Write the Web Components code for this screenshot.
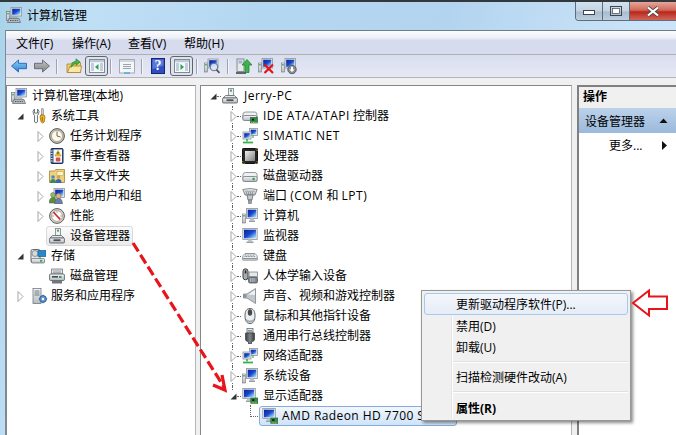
<!DOCTYPE html>
<html lang="zh">
<head>
<meta charset="utf-8">
<title>计算机管理</title>
<style>
  html,body{margin:0;padding:0;width:676px;height:435px;overflow:hidden;background:#fff}
  body{font:12px "Open Sans","Noto Sans CJK SC",sans-serif;color:#000}
  .en{letter-spacing:.5px}
  .wide{letter-spacing:.42px}
</style>
</head>
<body>
<mmc-window>
  <span slot="title">计算机管理</span>
  <mmc-menubar slot="menu"></mmc-menubar>
  <mmc-toolbar slot="tools"></mmc-toolbar>

  <mmc-pane slot="left" style="width:190px">
    <tree-row icon="app" ix="4" tx="25">计算机管理(本地)</tree-row>
    <tree-row open ax="10" icon="tools" ix="24" tx="44">系统工具</tree-row>
    <tree-row closed ax="30" icon="clock" ix="42" tx="63">任务计划程序</tree-row>
    <tree-row closed ax="30" icon="log" ix="42" tx="63">事件查看器</tree-row>
    <tree-row closed ax="30" icon="share" ix="42" tx="63">共享文件夹</tree-row>
    <tree-row closed ax="30" icon="users" ix="42" tx="63">本地用户和组</tree-row>
    <tree-row closed ax="30" icon="perf" ix="42" tx="63">性能</tree-row>
    <tree-row icon="devmgr" ix="42" tx="63" focus box-width="87">设备管理器</tree-row>
    <tree-row open ax="10" icon="storage" ix="23" tx="44">存储</tree-row>
    <tree-row icon="disk" ix="42" tx="63">磁盘管理</tree-row>
    <tree-row closed ax="10" icon="services" ix="25" tx="44">服务和应用程序</tree-row>
  </mmc-pane>

  <mmc-pane slot="center" style="width:372px">
    <tree-row open ax="9" icon="devmgr" ix="21" tx="43" dash="15"><span class="en">Jerry-PC</span></tree-row>
    <tree-row closed ax="29" icon="ide" ix="41" tx="62" guide><span class="en">IDE ATA/ATAPI</span> 控制器</tree-row>
    <tree-row closed ax="29" icon="net" ix="41" tx="62" guide><span class="en">SIMATIC NET</span></tree-row>
    <tree-row closed ax="29" icon="cpu" ix="41" tx="62" guide>处理器</tree-row>
    <tree-row closed ax="29" icon="drive" ix="41" tx="62" guide>磁盘驱动器</tree-row>
    <tree-row closed ax="29" icon="port" ix="41" tx="62" guide>端口 <span class="en">(COM</span> 和 <span class="en">LPT)</span></tree-row>
    <tree-row closed ax="29" icon="computer" ix="41" tx="62" guide>计算机</tree-row>
    <tree-row closed ax="29" icon="monitor" ix="41" tx="62" guide>监视器</tree-row>
    <tree-row closed ax="29" icon="keyboard" ix="41" tx="62" guide>键盘</tree-row>
    <tree-row closed ax="29" icon="hid" ix="41" tx="62" guide>人体学输入设备</tree-row>
    <tree-row closed ax="29" icon="sound" ix="41" tx="62" guide>声音、视频和游戏控制器</tree-row>
    <tree-row closed ax="29" icon="mouse" ix="41" tx="62" guide>鼠标和其他指针设备</tree-row>
    <tree-row closed ax="29" icon="usb" ix="41" tx="62" guide>通用串行总线控制器</tree-row>
    <tree-row closed ax="29" icon="net" ix="41" tx="62" guide>网络适配器</tree-row>
    <tree-row closed ax="29" icon="computer" ix="41" tx="62" guide>系统设备</tree-row>
    <tree-row open ax="29" icon="display" ix="41" tx="62" guide>显示适配器</tree-row>
    <tree-row icon="display" ix="61" tx="81" selected box-width="198" elbow><span class="wide">AMD Radeon HD 7700 Series</span></tree-row>
  </mmc-pane>

  <mmc-actions slot="right"></mmc-actions>
</mmc-window>

<context-menu>
  <menu-item hover>更新驱动程序软件(P)...</menu-item>
  <menu-item>禁用(D)</menu-item>
  <menu-item>卸载(U)</menu-item>
  <menu-sep style="margin-top:3.5px;margin-bottom:3.5px"></menu-sep>
  <menu-item>扫描检测硬件改动(A)</menu-item>
  <menu-sep></menu-sep>
  <menu-item bold>属性(R)</menu-item>
</context-menu>

<red-marks></red-marks>

<script>
// all icons are drawn on a 16x16 box
const DEFS = `<defs>
  <linearGradient id="scr" x1="0" y1="0" x2="1" y2="1"><stop offset="0" stop-color="#0a2398"/><stop offset=".5" stop-color="#1a48cc"/><stop offset=".72" stop-color="#5f9be8"/><stop offset="1" stop-color="#d4e8fb"/></linearGradient>
  <linearGradient id="metal" x1="0" y1="0" x2="0" y2="1"><stop offset="0" stop-color="#f4f6f7"/><stop offset="1" stop-color="#b4bbc0"/></linearGradient>
  <linearGradient id="dark" x1="0" y1="0" x2="1" y2="0"><stop offset="0" stop-color="#3a3e41"/><stop offset=".5" stop-color="#80868a"/><stop offset="1" stop-color="#34383b"/></linearGradient>
  <linearGradient id="chip" x1="0" y1="0" x2="1" y2="1"><stop offset="0" stop-color="#f0f0f0"/><stop offset="1" stop-color="#7f7f7f"/></linearGradient>
  <linearGradient id="blue" x1="0" y1="0" x2="0" y2="1"><stop offset="0" stop-color="#8fd0f8"/><stop offset="1" stop-color="#2c82d2"/></linearGradient>
  <linearGradient id="grey" x1="0" y1="0" x2="0" y2="1"><stop offset="0" stop-color="#c2c4c6"/><stop offset="1" stop-color="#7f8284"/></linearGradient>
</defs>`;
const screen = (x,y,w,h) => `<rect x="${x}" y="${y}" width="${w}" height="${h}" fill="#e4e7ea" stroke="#8d959c" stroke-width=".8"/><rect x="${x+1.2}" y="${y+1.2}" width="${w-2.4}" height="${h-2.4}" fill="url(#scr)"/>`;
const stand = (x,y,w) => `<path d="M${x+w/2-1.5} ${y}h3l1 2h-5z" fill="#bcc3c9"/><rect x="${x}" y="${y+2}" width="${w}" height="1.5" fill="#98a0a6"/>`;
const card = (x,y) => `<rect x="${x}" y="${y}" width="7" height="5.5" fill="#2f8f4a" stroke="#1d5e30" stroke-width=".6"/><path d="M${x+.8} ${y+5}h5.4" stroke="#e2c64a" stroke-dasharray="1 .6"/><rect x="${x+1.4}" y="${y+1.2}" width="2.2" height="1.8" fill="#111"/>`;
const tower = (y) => `<rect x=".5" y="${y}" width="3" height="9" fill="url(#metal)" stroke="#70777c" stroke-width=".6"/><rect x="1.2" y="${y+1}" width="1.5" height="1.6" fill="#3da24f"/>`;
const ICONS = {
  back:`<path d="M.5 8 7.500 2v3.300h8v5.400h-8V14z" fill="url(#blue)" stroke="#2d6fb4"/>`,
  fwd:`<path d="M15.500 8 8.500 2v3.300h-8v5.400h8V14z" fill="url(#grey)" stroke="#6d7072"/>`,
  upfolder:`<path d="M1 14.500V6h4l1-1.500h8.500v10z" fill="#f0cf72" stroke="#a8842c" stroke-width=".8"/><path d="M1.500 14.500 4 8h11.500l-1 6.500z" fill="#fbe6a2" stroke="#a8842c" stroke-width=".8"/><path d="M5 9.500q.5-5.500 5-6.500V.8L14 4l-4 3.400V5.200Q7 6 5 9.500z" fill="#47b548" stroke="#227a2b" stroke-width=".6"/>`,
  panelLeft:`<rect x=".5" y="1.500" width="15" height="13" fill="#f6f8fb" stroke="#7f8b97"/><rect x="1" y="2" width="14" height="2.200" fill="#bcc9d6"/><path d="M2 6h3M2 8h3M2 10h3M2 12h3M11 6h3M11 8h3M11 10h3M11 12h3" stroke="#8fa4bb"/><path d="M9.500 6v6L6 9z" fill="#2aa05a"/>`,
  panelRight:`<rect x=".5" y="1.500" width="15" height="13" fill="#f6f8fb" stroke="#7f8b97"/><rect x="1" y="2" width="14" height="2.200" fill="#bcc9d6"/><path d="M2 6h3M2 8h3M2 10h3M2 12h3M11 6h3M11 8h3M11 10h3M11 12h3" stroke="#8fa4bb"/><path d="M6.500 6v6l3.500-3z" fill="#2aa05a"/>`,
  sheet:`<rect x=".5" y="1.500" width="15" height="13.500" fill="#f4f6f8" stroke="#a3abb2"/><rect x="1" y="2" width="14" height="2" fill="#cfd6dc"/><path d="M4 6.500h8M4 8.500h8M4 10.500h8" stroke="#97a3ae"/><path d="M5 15h6" stroke="#45a7e0" stroke-width="1.400"/>`,
  help:`<rect x=".5" y=".5" width="13" height="15" fill="#2f4fc0" stroke="#17266f"/><path d="M1.500 1.500h11v6L1.500 11z" fill="#6f8ce6" opacity=".7"/>`,
  scan:`${tower(5)}${screen(4,1,10,9)}<circle cx="10" cy="9" r="3.800" fill="#dcecfa" fill-opacity=".85" stroke="#66727e"/><path d="M12.500 11.600 15.500 15" stroke="#555" stroke-width="1.800"/>`,
  update:`<rect x="1" y="1" width="7" height="12.500" fill="#e6e9ea" stroke="#6e757a" stroke-width=".8"/><rect x="2.500" y="2.500" width="4" height="3" fill="#9fb8cc"/><path d="M0 15h10" stroke="#444" stroke-width="1.600"/><path d="M11 1.500 16 7h-3v7.500H9V7H6z" fill="#39b54a" stroke="#1d7a2a" stroke-width=".7"/>`,
  remove:`${tower(5)}${screen(4,.5,10.500,9.500)}<path d="M6.500 6.500 15 15M15 6.500 6.500 15" stroke="#e2141a" stroke-width="2.200"/>`,
  disable:`${tower(5)}${screen(4,.5,10.500,9.500)}<circle cx="11" cy="11.500" r="4.200" fill="#8a9096" stroke="#555b60"/><path d="M10 8.800h2v2.600h1.600L11 14l-2.600-2.600H10z" fill="#fff"/>`,
  app:`${screen(5,.5,10.500,8.500)}<rect x="3.500" y="9.500" width="8" height="1.200" fill="#9aa1a8"/><rect x=".4" y="4.500" width="3.400" height="9" fill="url(#metal)" stroke="#6e767c" stroke-width=".7"/><rect x="1.200" y="5.800" width="1.600" height="1.600" fill="#3da24f"/><path d="M3 11.500h10l1.500 4H1.500z" fill="#b4babf" stroke="#5e666c" stroke-width=".7"/><path d="M4 13.500h8" stroke="#555" stroke-dasharray="1 .7"/>`,
  tools:`<path d="M3.500 1Q1 3 2.500 6l1 1.500V14q1.500 2 3 0V7.500L7.500 6Q9 3 6.500 1v4h-3z" fill="#f6f7f8" stroke="#54595e" stroke-width=".8"/><rect x="10.300" y=".8" width="2" height="6.200" fill="#cdd2d6" stroke="#66696c" stroke-width=".5"/><path d="M9.600 7h3.400l1 2-.8 5q-1.500 2-3 0l-1.200-5z" fill="#f0b91e" stroke="#a36c08" stroke-width=".8"/><path d="M11.300 9v4.500" stroke="#a36c08"/>`,
  clock:`<circle cx="8" cy="8" r="7.400" fill="#c4c0b0" stroke="#5c5a52"/><circle cx="8" cy="8" r="5.500" fill="#fdf9ec" stroke="#8b8772" stroke-width=".6"/><path d="M8 3.600V8l3.500 1" stroke="#6f6a55" fill="none"/>`,
  log:`<rect x="2" y=".5" width="12" height="15" rx="1" fill="#3a5a94" stroke="#1d2f58"/><rect x="4.500" y="1.500" width="8.500" height="13" fill="#f8f8f4"/><path d="M1.500 3h2M1.500 5.500h2M1.500 8h2M1.500 10.500h2M1.500 13h2" stroke="#dfe3e8"/><path d="M9 2.500 12 8H6z" fill="#f5cb28" stroke="#a27a06" stroke-width=".5"/><path d="M9 4v2.300" stroke="#222"/><rect x="6.800" y="9.500" width="4.500" height="4" rx="1" fill="#d8504a"/>`,
  share:`<path d="M.5 14.500V3h5l1.200-1.500h8.800v13z" fill="#efd07b" stroke="#a7842f" stroke-width=".8"/><rect x="8" y="3.500" width="6.500" height="4" fill="#fff4c8" stroke="#b4974a" stroke-width=".5"/><circle cx="4" cy="9" r="1.800" fill="#4a88c9"/><path d="M1 15q0-4 3-4t3 4z" fill="#3c8a5a"/><circle cx="9.500" cy="9" r="1.800" fill="#d89a5a"/><path d="M6.500 15q0-4 3-4t3 4z" fill="#3a66b0"/>`,
  users:`${screen(5,.5,10.500,9)}<circle cx="4" cy="7" r="2.400" fill="#9cb86a" stroke="#49702a" stroke-width=".5"/><path d="M.3 15q0-5.500 3.700-5.500T7.700 15z" fill="#5f8f3a" stroke="#3c5d24" stroke-width=".5"/><circle cx="9.500" cy="8" r="2.500" fill="#e0b183" stroke="#916a44" stroke-width=".5"/><path d="M5.600 16q0-5.700 3.900-5.700t3.900 5.700z" fill="#6d7fa3" stroke="#445575" stroke-width=".5"/>`,
  perf:`<circle cx="8" cy="8" r="7.400" fill="#d8d6cd" stroke="#5c5a52"/><circle cx="8" cy="8" r="5.400" fill="#fff" stroke="#8d8b80" stroke-width=".7"/><path d="M4.500 4.200 8 8l3.200 3.400" stroke="#d32a2a" stroke-width="1.700"/><path d="M8 3.400v1.200M12.600 8h-1.200M3.400 8h1.200" stroke="#777"/>`,
  devmgr:`<rect x="6.500" y=".5" width="5" height="7" fill="#eef1f2" stroke="#7b8287" stroke-width=".8"/><rect x="8" y="1.600" width="2" height="2" fill="#44a854"/><path d="M3.500 7.500h9L15 10H1z" fill="#e6e9eb" stroke="#5f666b" stroke-width=".8"/><rect x=".6" y="10" width="14.800" height="5" rx=".8" fill="url(#metal)" stroke="#50565a" stroke-width=".8"/><rect x="4.500" y="11.300" width="7" height="1.800" fill="#4c5357"/>`,
  storage:`<rect x="1" y="1.500" width="9" height="13" rx="1.500" fill="#e4e7e9" stroke="#666c71"/><circle cx="5" cy="5.500" r="3" fill="#d6dadd" stroke="#70767b" stroke-width=".7"/><rect x="8" y="2.500" width="8" height="6" fill="#2a8ac9" stroke="#1c5f8e" stroke-width=".7"/><rect x="1.500" y="10.500" width="13" height="4.500" rx="1" fill="url(#metal)" stroke="#63696d" stroke-width=".7"/><rect x="10" y="11.800" width="2.200" height="2" fill="#41a653"/>`,
  disk:`<path d="M2.500 1h11v5h-11z" fill="#e4e7e9" stroke="#6e7478" stroke-width=".8"/><path d="M4 3h8M4 4.700h8" stroke="#9aa0a5"/><rect x=".6" y="6" width="14.800" height="6.500" rx="1" fill="url(#metal)" stroke="#50565a" stroke-width=".8"/><rect x="3" y="8" width="6" height="1.600" fill="#444a4e"/><rect x="10" y="8" width="2.600" height="2" fill="#3ea350"/><rect x="3" y="12.500" width="10" height="3" fill="#70767b"/>`,
  services:`<rect x="1" y=".5" width="8" height="15" fill="url(#metal)" stroke="#737a80" stroke-width=".8"/><path d="M2.500 3h5M2.500 5h5M2.500 7h5" stroke="#6f777e"/><circle cx="11" cy="11" r="3.400" fill="#5c95cf" stroke="#2f5f93"/><circle cx="11" cy="11" r="1.200" fill="#fff"/><path d="M11 6.800v1.300M11 13.900v1.300M6.800 11h1.300M13.900 11h1.300" stroke="#3c6ea3" stroke-width="1.200"/>`,
  ide:`<path d="M.8 7q0-3 2.700-3h9.500Q15 4 15 7v3H.8z" fill="#eef0f1" stroke="#7c8388" stroke-width=".8"/><rect x=".8" y="7.500" width="14" height="5" rx="1.500" fill="url(#metal)" stroke="#6e757a" stroke-width=".8"/>${card(8.500,9.500)}`,
  net:`${screen(7.500,.5,8,7)}${screen(1,4,8,7)}<path d="M5 11v2.500" stroke="#37b24d" stroke-width="1.600"/><path d="M1 14.500h10" stroke="#37b24d" stroke-width="1.800"/><path d="M11 7.500v2.500" stroke="#37b24d" stroke-width="1.200"/>`,
  cpu:`<rect x=".5" y=".5" width="15" height="15" rx=".8" fill="#262626" stroke="#111"/><rect x="3" y="3" width="10" height="10" fill="url(#chip)"/><path d="M.8 13v2.400h2.400M12.800 15.400h2.400V13M15.200 3V.8h-2.200" fill="none" stroke="#c9a227" stroke-dasharray="1 1"/>`,
  drive:`<path d="M.8 7.500q0-3 2.700-3h9.500q2.200 0 2.200 3v2H.8z" fill="#eef0f1" stroke="#7c8388" stroke-width=".8"/><rect x=".8" y="8.500" width="14.400" height="5" rx="1.500" fill="url(#metal)" stroke="#6e757a" stroke-width=".8"/><rect x="10.500" y="9.800" width="2.200" height="2.400" fill="#36a04e"/>`,
  port:`<path d="M.8 1.500q7.200-2 14.400 0L13 7H3z" fill="url(#metal)" stroke="#6a7176" stroke-width=".8"/><path d="M3.500 3.200h9M4 5h8" stroke="#60676c" stroke-dasharray="1 1"/><path d="M5 7h6l-1 5H6z" fill="#c3c8cb" stroke="#666d72" stroke-width=".8"/><rect x="6.500" y="12" width="3" height="3.500" fill="#9ca2a6" stroke="#666d72" stroke-width=".6"/>`,
  computer:`${tower(6)}${screen(4.500,.5,11,10)}${stand(7,10.500,6)}`,
  monitor:`${screen(.8,.5,14.400,11)}${stand(4.500,11.500,7)}`,
  keyboard:`<path d="M3 5.500h10q2.500 1.500 2.500 5H.5q0-3.500 2.500-5z" fill="#eceef0" stroke="#7a8289" stroke-width=".8"/><path d="M3 7h10M2.500 8.500h11" stroke="#7c858c" stroke-dasharray="1 .6"/><rect x=".5" y="10.500" width="15" height="1.800" rx=".9" fill="#c4c9cd" stroke="#7a8289" stroke-width=".6"/>`,
  hid:`<rect x="1" y=".8" width="5" height="11" rx="2.500" fill="#a6acb0" stroke="#3b4044"/><rect x="2.800" y="2.500" width="1.500" height="3" fill="#222"/><rect x="7" y="4" width="8.500" height="5" fill="#e6e9eb" stroke="#6b7277" stroke-width=".7"/><rect x="6.500" y="9" width="9" height="6" rx="1.500" fill="#7d858b" stroke="#3f4549" stroke-width=".7"/><path d="M8 11h5.500M8 13h5.500" stroke="#e6e9eb" stroke-dasharray="1 .8"/>`,
  sound:`<path d="M1.500 6h3.500L13.500 .5v15L5 10H1.500z" fill="#c2c7cb" stroke="#7c8388" stroke-width=".8"/><path d="M6 6.500 13 2v5z" fill="#f0f2f3"/><path d="M2 6.500h2.500v3H2z" fill="#888e93"/>`,
  mouse:`<path d="M8 .5c3.500 0 5 3 5 7 0 5-1.500 8-5 8s-5-3-5-8c0-4 1.500-7 5-7z" fill="#eceef0" stroke="#5a6065"/><ellipse cx="8" cy="4.500" rx="2.200" ry="3.200" fill="#43494d"/><path d="M4 11q4 3 8 0v2q-4 3-8 0z" fill="#a3a9ae"/>`,
  usb:`<rect x="5" y=".5" width="6" height="4.500" fill="url(#metal)" stroke="#6a7075" stroke-width=".8"/><path d="M7 2v1.500M9 2v1.500" stroke="#444"/><path d="M3.500 5h9v6.500q0 1-1 1.500l-2 1v2h-3v-2l-2-1q-1-.5-1-1.500z" fill="url(#dark)" stroke="#2d3033" stroke-width=".6"/>`,
  display:`${screen(.8,.5,12.500,10)}${stand(4,10.500,6)}${card(8.800,10)}`
};

class MmcIcon extends HTMLElement {
  connectedCallback() {
    this.attachShadow({ mode: 'open' }).innerHTML = `
      <style>:host{display:block;width:16px;height:16px;flex:none} svg{display:block}</style>
      <svg width="16" height="16" viewBox="0 0 16 16">${DEFS}${ICONS[this.getAttribute('name')] || ''}</svg>`;
  }
}
customElements.define('mmc-icon', MmcIcon);

const windowTpl = document.createElement('template');
windowTpl.innerHTML = `
  <style>
    :host{display:block;position:relative;width:676px;height:435px;overflow:hidden;
      background:linear-gradient(100deg,#a9d3ea 0,#bfdff5 12%,#b4d7f1 35%,#b3d4ef 60%,#c9e3f8 85%,#cfe6f9 100%)}
    .topline{height:2px;background:#33383c}
    .title{height:28px;display:flex;align-items:center;padding-left:6px;gap:5px;font-size:12px;box-sizing:border-box;padding-bottom:3px}
    .frame{position:absolute;left:5px;top:30px;right:0;bottom:0;display:flex;flex-direction:column;background:#f0f0f0;border-left:1px solid #7d8a96;border-top:1px solid #6f7c88}
    .menu{height:23px;background:linear-gradient(#fbfcfd 0,#eef0f7 30%,#d6dbed 40%,#d6dbed 100%);border-bottom:1px solid #b0b0b0;flex:none}
    .tools{height:22px;background:linear-gradient(#d9deef,#e6e9f4);border-bottom:1px solid #b4b4b4;flex:none}
    .panes{flex:1;display:flex;padding-top:7px;min-height:0}
    .gap1{width:4px;flex:none}.gap2{width:5px;flex:none}
    .caps{position:absolute;top:2px;right:0}
  </style>
  <div class="topline"></div>
  <div class="title"><mmc-icon name="app"></mmc-icon><slot name="title"></slot></div>
  <win-caps class="caps"></win-caps>
  <div class="frame">
    <div class="menu"><slot name="menu"></slot></div>
    <div class="tools"><slot name="tools"></slot></div>
    <div class="panes">
      <slot name="left"></slot><div class="gap1"></div>
      <slot name="center"></slot><div class="gap2"></div>
      <slot name="right"></slot>
    </div>
  </div>`;
class MmcWindow extends HTMLElement {
  constructor() {
    super();
    this.attachShadow({ mode: 'open' }).appendChild(windowTpl.content.cloneNode(true));
  }
}

class WinCaps extends HTMLElement {
  constructor() {
    super();
    this.attachShadow({ mode: 'open' }).innerHTML = `
      <style>
        :host{display:flex;height:19px;border:1px solid #5f6d7a;border-top:0;border-right:0;border-radius:0 0 0 4px;overflow:hidden;box-sizing:border-box}
        div{display:flex;align-items:center;justify-content:center;box-sizing:border-box;height:100%}
        .b{width:27px;background:linear-gradient(#d3e2ef 0,#c3d3e2 50%,#a8bccd 55%,#bccfdf 100%);border-right:1px solid #5f6d7a}
        .x{width:46px;background:linear-gradient(#e5a79a 0,#d0695a 45%,#b8281b 55%,#d2655a 100%)}
      </style>
      <div class="b"><svg width="12" height="6" style="margin-top:3px"><rect x=".5" y=".5" width="11" height="4" fill="#fff" stroke="#3b4650"/></svg></div>
      <div class="b"><svg width="13" height="11"><rect x=".5" y=".5" width="11" height="9" fill="none" stroke="#3b4650"/><rect x="2.500" y="2.500" width="7" height="5" fill="#fff" stroke="#3b4650" stroke-width=".7"/></svg></div>
      <div class="x"><svg width="14" height="11" viewBox="0 0 14 11"><path d="M2 1.500 12 9.500M12 1.500 2 9.500" stroke="#4a4a4a" stroke-width="3.600"/><path d="M2 1.500 12 9.500M12 1.500 2 9.500" stroke="#fff" stroke-width="2.200"/></svg></div>`;
  }
}

class MmcMenubar extends HTMLElement {
  constructor() {
    super();
    this.attachShadow({ mode: 'open' }).innerHTML = `
      <style>
        :host{display:flex;height:100%;align-items:center;padding-left:10px;font-size:12px}
        span{white-space:nowrap;width:56px}
        span:first-child{width:54px}
      </style>
      <span>文件(F)</span><span>操作(A)</span><span>查看(V)</span><span>帮助(H)</span>`;
  }
}

class MmcToolbar extends HTMLElement {
  constructor() {
    super();
    this.attachShadow({ mode: 'open' }).innerHTML = `
      <style>
        :host{display:flex;height:100%;align-items:center;padding-left:5px}
        i{display:block;width:1px;height:15px;background:#9ca3ad;border-right:1px solid #f5f6fa;flex:none}
        .on{width:23px;height:20px;box-sizing:border-box;border:1px solid #5e6570;border-radius:3px;background:#dfe2ec;display:flex;align-items:center;justify-content:center;flex:none}
        b{position:absolute;left:0;right:0;top:0;text-align:center;color:#fff;font:bold 14px/16px "Liberation Serif",serif}
        .help{position:relative;width:14px;height:16px;flex:none}
      </style>
      <mmc-icon name="back"></mmc-icon>
      <mmc-icon name="fwd" style="margin-left:7px"></mmc-icon>
      <i style="margin-left:6px"></i>
      <mmc-icon name="upfolder" style="margin-left:8px"></mmc-icon>
      <div class="on" style="margin-left:3px"><mmc-icon name="panelLeft"></mmc-icon></div>
      <i style="margin-left:2px"></i>
      <mmc-icon name="sheet" style="margin-left:7px"></mmc-icon>
      <i style="margin-left:6px"></i>
      <div class="help" style="margin-left:8px"><mmc-icon name="help"></mmc-icon><b>?</b></div>
      <div class="on" style="margin-left:5px"><mmc-icon name="panelRight"></mmc-icon></div>
      <i style="margin-left:3px"></i>
      <mmc-icon name="scan" style="margin-left:6px"></mmc-icon>
      <i style="margin-left:7px"></i>
      <mmc-icon name="update" style="margin-left:7px"></mmc-icon>
      <mmc-icon name="remove" style="margin-left:6px"></mmc-icon>
      <mmc-icon name="disable" style="margin-left:7px"></mmc-icon>`;
  }
}

class MmcPane extends HTMLElement {
  constructor() {
    super();
    this.attachShadow({ mode: 'open' }).innerHTML = `
      <style>
        :host{display:block;box-sizing:border-box;background:#fff;border-top:1px solid #828790;border-left:1px solid #828790;border-right:1px solid #b5b5b5;flex:none;overflow:hidden;height:100%}
      </style>
      <slot></slot>`;
  }
}

// one tree line: ax / ix / tx are the left edges of expander, icon and text inside the pane
class TreeRow extends HTMLElement {
  connectedCallback() {
    const num = (n, d) => this.hasAttribute(n) ? +this.getAttribute(n) : d;
    const has = n => this.hasAttribute(n);
    const ix = num('ix', 0), tx = num('tx', 0);
    const boxed = has('focus') || has('selected');
    const ax = num('ax', 0);
    let arrow = '';
    if (has('open')) arrow = '<svg width="7" height="7"><path d="M6.500 .5v6h-6z" fill="#333"/></svg>';
    if (has('closed')) arrow = '<svg width="7" height="11"><path d="M1 .5 6 5.500 1 10.500z" fill="#fff" stroke="#a6a6a6"/></svg>';
    const lead = has('open') || has('closed') ? ax + 7 : 0;
    const boxLeft = boxed ? ix - 3 : ix;
    const dash = num('dash', 0);
    this.attachShadow({ mode: 'open' }).innerHTML = `
      <style>
        :host{display:flex;align-items:center;height:20px;position:relative;white-space:nowrap;font-size:12px}
        .a{position:relative;z-index:1;height:13px;display:flex;align-items:center;background:#fff;flex:none;margin-left:${ax}px}
        .body{display:flex;align-items:center;height:20px;box-sizing:border-box;position:relative;z-index:1;flex:none;margin-left:${boxLeft - lead}px;${boxed ? `width:${num('box-width', 0)}px;padding-left:2px;border:1px solid transparent;border-radius:3px;overflow:hidden;` : ''}}
        .t{margin-left:${tx - ix - 16}px;line-height:18px}
        .sel{background:linear-gradient(#f2f7fd,#cfe3f8);border-color:#84acdd}
        .foc{background:linear-gradient(#fbfbfb,#ebebeb);border-color:#d9d9d9}
        .v{position:absolute;left:31px;top:0;border-left:1px dotted #666;height:${has('open') ? 10 : 20}px}
        .h{position:absolute;left:${ax + 7}px;top:10px;width:${ix - ax - 8}px;border-top:1px dotted #666}
        .elbow{position:absolute;left:49px;top:-1px;width:9px;height:11px;border-left:1px dotted #666;border-bottom:1px dotted #666}
      </style>
      ${has('guide') ? '<div class="v"></div><div class="h"></div>' : ''}
      ${dash ? '<div class="h"></div>' : ''}
      ${has('elbow') ? '<div class="elbow"></div>' : ''}
      ${arrow ? `<div class="a">${arrow}</div>` : ''}
      <div class="body ${has('selected') ? 'sel' : ''} ${has('focus') ? 'foc' : ''}">
        <mmc-icon name="${this.getAttribute('icon')}"></mmc-icon>
        <span class="t"><slot></slot></span>
      </div>`;
  }
}

class MmcActions extends HTMLElement {
  constructor() {
    super();
    this.attachShadow({ mode: 'open' }).innerHTML = `
      <style>
        :host{display:block;flex:1;background:#fff;border-top:2px solid #808080;border-left:2px solid #808080;font-size:12px;height:100%;box-sizing:border-box}
        .h{height:21px;background:#f0f0f0;font-weight:bold;line-height:20px;padding-left:4px}
        .s{height:25px;background:linear-gradient(#bcd2ea,#9ab9dc);display:flex;align-items:center;padding:0 8px 0 6px;justify-content:space-between}
        .m{height:24px;display:flex;align-items:center;justify-content:space-between;padding:0 9px 0 30px}
      </style>
      <div class="h">操作</div>
      <div class="s"><span>设备管理器</span><svg width="9" height="5"><path d="M.5 5 4.500 .5 8.500 5z" fill="#111"/></svg></div>
      <div class="m"><span>更多...</span><svg width="5" height="9"><path d="M0 0 5 4.500 0 9z" fill="#111"/></svg></div>`;
  }
}

class ContextMenu extends HTMLElement {
  constructor() {
    super();
    this.attachShadow({ mode: 'open' }).innerHTML = `
      <style>
        :host{position:absolute;z-index:5;left:421px;top:290px;width:210px;box-sizing:border-box;padding:2px;background:#f0f0f0;border:1px solid #979797;box-shadow:2px 2px 3px rgba(0,0,0,.45);display:flex;flex-direction:column;font-size:12px}
        .gutter{position:absolute;left:29px;top:2px;bottom:2px;width:2px;background:linear-gradient(90deg,#e2e3e3 50%,#fff 50%)}
      </style>
      <div class="gutter"></div><slot></slot>`;
  }
}

class MenuItem extends HTMLElement {
  connectedCallback() {
    const hover = this.hasAttribute('hover');
    this.attachShadow({ mode: 'open' }).innerHTML = `
      <style>
        :host{display:flex;align-items:center;position:relative;height:${hover ? 22 : 21}px;flex:none;box-sizing:border-box;padding-left:32px;${this.hasAttribute('bold') ? 'font-weight:bold;' : ''}
          ${hover ? 'background:linear-gradient(#f3f6fb,#e6edf7);border:1px solid #a8c8ec;border-radius:3px;padding-left:31px;' : ''}}
      </style>
      <slot></slot>`;
  }
}

class MenuSep extends HTMLElement {
  constructor() {
    super();
    this.attachShadow({ mode: 'open' }).innerHTML = `
      <style>:host{display:block;position:relative;flex:none;height:2px;margin:4px 0 4px 29px;background:linear-gradient(#e0e0e0 50%,#fff 50%)}</style>`;
  }
}

// the tutorial's hand-drawn red marks lie over the screenshot
class RedMarks extends HTMLElement {
  constructor() {
    super();
    this.attachShadow({ mode: 'open' }).innerHTML = `
      <style>:host{position:absolute;z-index:6;left:0;top:0;width:676px;height:435px;pointer-events:none} svg{display:block}</style>
      <svg width="676" height="435">
        <path d="M133 243 224 387" stroke="#e8141c" stroke-width="3.200" stroke-dasharray="10 4" fill="none"/>
        <path d="M222 375 225 390 213 385" stroke="#e8141c" stroke-width="3.200" fill="none"/>
        <path d="M633 303 649 290.500V296.500H667V309H649V315.500Z" fill="#fff" stroke="#e8141c" stroke-width="2"/>
      </svg>`;
  }
}

customElements.define('mmc-window', MmcWindow);
customElements.define('win-caps', WinCaps);
customElements.define('mmc-menubar', MmcMenubar);
customElements.define('mmc-toolbar', MmcToolbar);
customElements.define('mmc-pane', MmcPane);
customElements.define('tree-row', TreeRow);
customElements.define('mmc-actions', MmcActions);
customElements.define('context-menu', ContextMenu);
customElements.define('menu-item', MenuItem);
customElements.define('menu-sep', MenuSep);
customElements.define('red-marks', RedMarks);
</script>
</body>
</html>
